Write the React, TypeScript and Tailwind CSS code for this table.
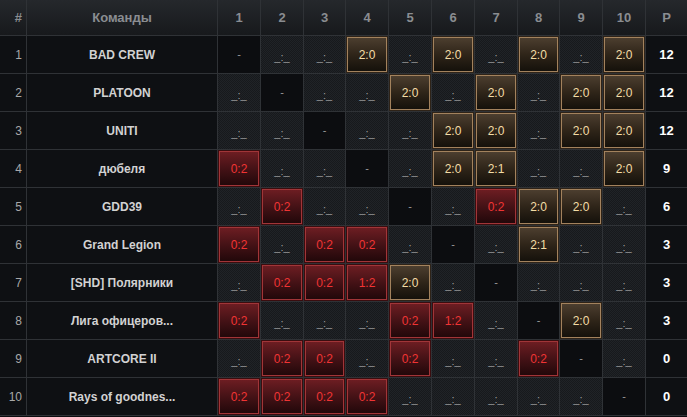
import React from "react";

type Cell = string;

const teams: { name: string; scores: Cell[]; points: number }[] = [
  { name: "BAD CREW", scores: ["-", "", "", "2:0", "", "2:0", "", "2:0", "", "2:0"], points: 12 },
  { name: "PLATOON", scores: ["", "-", "", "", "2:0", "", "2:0", "", "2:0", "2:0"], points: 12 },
  { name: "UNITI", scores: ["", "", "-", "", "", "2:0", "2:0", "", "2:0", "2:0"], points: 12 },
  { name: "дюбеля", scores: ["0:2", "", "", "-", "", "2:0", "2:1", "", "", "2:0"], points: 9 },
  { name: "GDD39", scores: ["", "0:2", "", "", "-", "", "0:2", "2:0", "2:0", ""], points: 6 },
  { name: "Grand Legion", scores: ["0:2", "", "0:2", "0:2", "", "-", "", "2:1", "", ""], points: 3 },
  { name: "[SHD] Полярники", scores: ["", "0:2", "0:2", "1:2", "2:0", "", "-", "", "", ""], points: 3 },
  { name: "Лига офицеров...", scores: ["0:2", "", "", "", "0:2", "1:2", "", "-", "2:0", ""], points: 3 },
  { name: "ARTCORE II", scores: ["", "0:2", "0:2", "", "0:2", "", "", "0:2", "-", ""], points: 0 },
  { name: "Rays of goodnes...", scores: ["0:2", "0:2", "0:2", "0:2", "", "", "", "", "", "-"], points: 0 },
];

const headerCell =
  "flex items-center justify-center bg-gradient-to-b from-[#25282c] to-[#17191c] text-[13px] font-bold text-[#8a8d91]";

const texture =
  "bg-[repeating-conic-gradient(#202327_0%_25%,#17191c_0%_50%)] bg-[length:2px_2px]";

const ScoreCell = ({ value }: { value: Cell }) => {
  if (value === "-") {
    return (
      <div className="flex items-center justify-center bg-[#0c0d10] text-[11px] text-[#9a9a9a]">
        -
      </div>
    );
  }
  if (value === "") {
    return (
      <div className={`flex items-center justify-center ${texture} pt-[6px] text-[11px] text-[#9c9c9c]`}>
        _:_
      </div>
    );
  }
  const [a, b] = value.split(":").map(Number);
  const win = a > b;
  return (
    <div
      className={
        win
          ? "border border-[#2e2318] bg-[#15110c]"
          : "border border-[#3a0d0f] bg-[#1f0709]"
      }
    >
      <div
        className={
          win
            ? "flex h-full items-center justify-center border border-[#a3825d] bg-gradient-to-b from-[#4c3e2f] via-[#2f2519] to-[#15110b] text-[12px] text-[#f3dda6]"
            : "flex h-full items-center justify-center border border-[#a13538] bg-gradient-to-b from-[#6d1d22] via-[#451216] to-[#22080a] text-[12px] text-[#f03434]"
        }
      >
        {value}
      </div>
    </div>
  );
};

export default function App() {
  return (
    <div
      className="h-[417px] w-[687px] overflow-hidden bg-[#0c0d10]"
      style={{ fontFamily: '"Liberation Sans", Arial, sans-serif' }}
    >
      <div className="grid grid-cols-[26px_190px_42px_42px_41px_42px_42px_42px_42px_41px_42px_42px_41px] grid-rows-[35px_repeat(10,37px)] gap-px border-b border-[#2f3236] bg-[#2f3236]">
        <div className={`${headerCell} justify-end pr-[4px]`}>#</div>
        <div className={headerCell}>Команды</div>
        {Array.from({ length: 10 }, (_, i) => (
          <div key={i} className={headerCell}>
            {i + 1}
          </div>
        ))}
        <div className={headerCell}>P</div>

        {teams.map((t, r) => (
          <React.Fragment key={t.name}>
            <div className="flex items-center justify-end bg-[#0e1013] pr-[4px] text-[12px] text-[#a8a8a8]">
              {r + 1}
            </div>
            <div className="flex items-center justify-center bg-[#0e1013] text-[12px] font-bold text-[#d2d2d2]">
              {t.name}
            </div>
            {t.scores.map((s, c) => (
              <ScoreCell key={c} value={s} />
            ))}
            <div className="flex items-center justify-center bg-[#0e1013] text-[13px] font-bold text-white">
              {t.points}
            </div>
          </React.Fragment>
        ))}
      </div>
    </div>
  );
}
